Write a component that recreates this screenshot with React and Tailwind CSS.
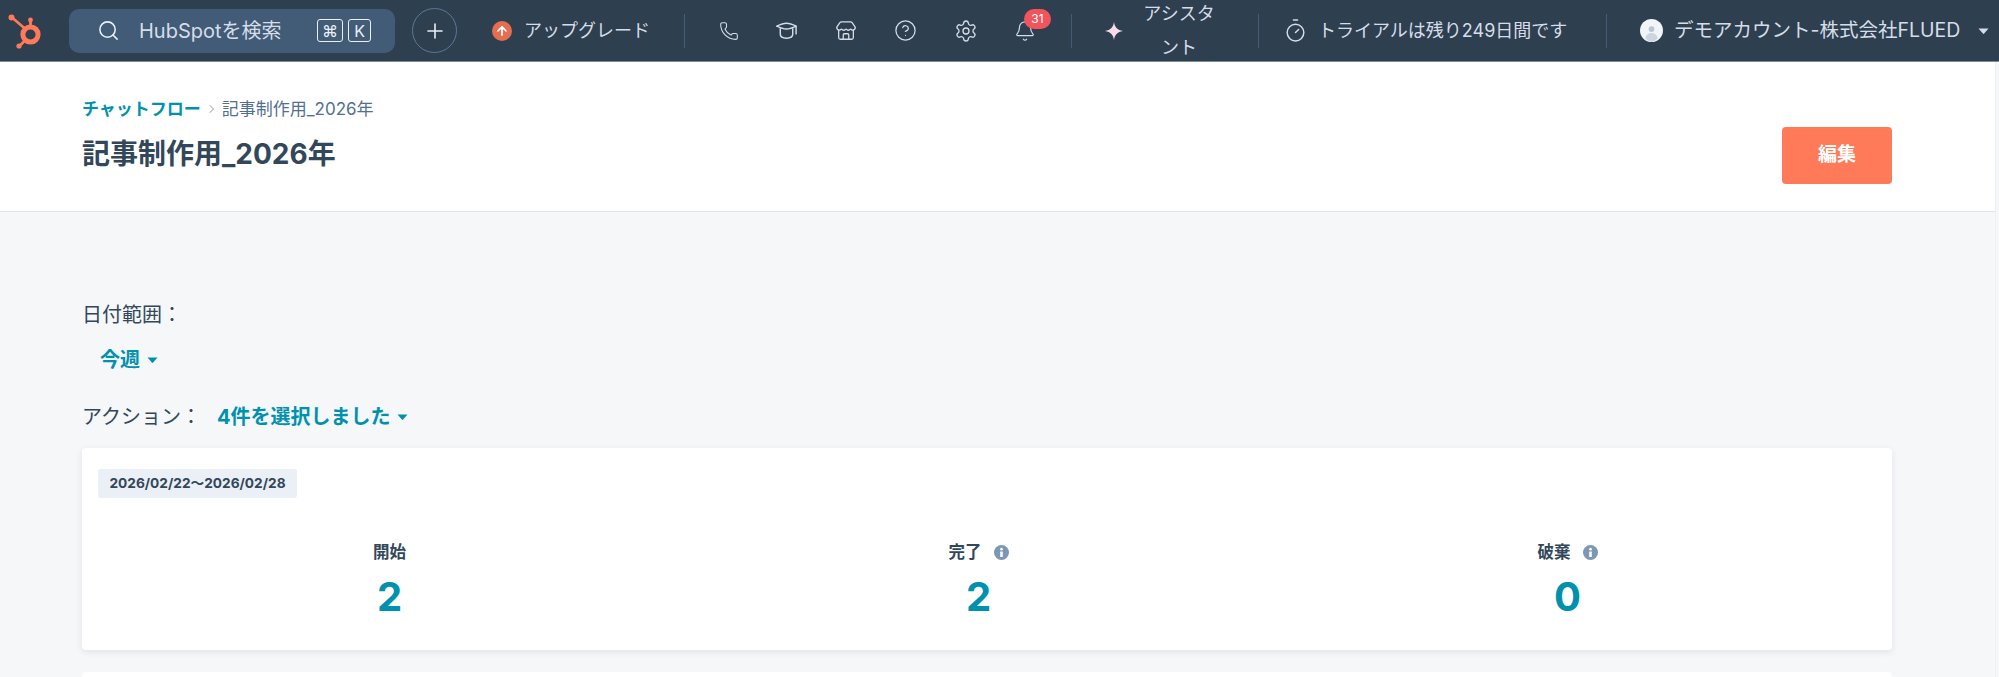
import { Phone, Store, CircleHelp, Settings, Bell, Timer, Search, Plus, ArrowUp } from 'lucide-react';

const Divider = ({ className = '' }) => <div className={`w-px h-[34px] bg-[#425b76] shrink-0 ${className}`} />;

const Caret = ({ className = '' }) => (
  <svg viewBox="0 0 10 6" className={`w-[11px] h-[6px] fill-current ${className}`}>
    <path d="M0 0.5h10L5.6 5.6a.8.8 0 0 1-1.2 0z" />
  </svg>
);

const InfoIcon = () => (
  <svg viewBox="0 0 16 16" className="w-[15px] h-[15px]">
    <circle cx="8" cy="8" r="8" fill="#7c98b6" />
    <circle cx="8" cy="4.4" r="1.4" fill="#fff" />
    <path d="M6.6 7h2.8v5.8H6.6z" fill="#fff" />
  </svg>
);

const HubLogo = () => (
  <svg viewBox="0 0 40 40" className="w-10 h-10 shrink-0">
    <g fill="none" stroke="#ff7a59">
      <circle cx="23.5" cy="23.5" r="7.6" strokeWidth="5" />
      <path d="M5 6.5l14 12" strokeWidth="2.6" />
      <path d="M23.5 9v7" strokeWidth="2.8" />
      <path d="M18 29.5l-5.5 5.5" strokeWidth="2.6" />
    </g>
    <circle cx="4.5" cy="6.5" r="3" fill="#ff7a59" />
    <circle cx="23.5" cy="9" r="2.4" fill="#ff7a59" />
    <circle cx="12" cy="35" r="2.6" fill="#ff7a59" />
  </svg>
);

const CapIcon = () => (
  <svg viewBox="0 0 24 20" className="w-[23px] h-[20px]" fill="none" stroke="#d5dee8" strokeWidth="1.5" strokeLinejoin="round" strokeLinecap="round">
    <path d="M2 5c4-2 8-3 10-3s6 1 10 3v8" />
    <path d="M2 5c4 2 8 3 10 3s6-1 10-3" />
    <path d="M5.5 7.5v6c0 2.5 3 4 6.5 4s6.5-1.500 6.5-4v-6" />
  </svg>
);

const StoreIcon = () => <Store className="w-[22px] h-[22px]" strokeWidth={1.4} color="#d5dee8" />;

const Sparkle = () => (
  <svg viewBox="0 0 20 20" className="w-[18px] h-[18px]">
    <path d="M10 0c.8 5.6 3.6 9 10 10-6.4 1-9.2 4.4-10 10-.8-5.6-3.6-9-10-10 6.4-1 9.200-4.4 10-10z" fill="#fbdbe6" />
  </svg>
);

const Avatar = () => (
  <svg viewBox="0 0 24 24" className="w-[23px] h-[23px] shrink-0">
    <circle cx="12" cy="12" r="12" fill="#f2f5f8" />
    <circle cx="12" cy="10.5" r="3" fill="#b8c6d4" />
    <path d="M5.5 20c1-4 3.5-5.5 6.500-5.5s5.500 1.5 6.500 5.5A11 11 0 0 1 12 24a11 11 0 0 1-6.5-4z" fill="#cbd6e2" />
  </svg>
);

const Navbar = () => (
  <nav className="h-[62px] bg-[#2e3f50] border-b border-[#7c8a99] flex items-center text-[#d5dee8] text-[18px] whitespace-nowrap">
    <div className="ml-[7px]"><HubLogo /></div>

    {/* Search */}
    <div className="ml-[22px] w-[326px] h-[44px] rounded-[10px] bg-[#425b76] flex items-center pl-[28px] shrink-0">
      <Search className="w-[23px] h-[23px]" strokeWidth={1.6} color="#eaf0f6" />
      <span className="ml-[19px] w-[178px] text-[20px]">HubSpotを検索</span>
      <span className="w-[26px] h-[23px] border border-[#eaf0f6] rounded-[3px] flex items-center justify-center text-[16px] text-[#eaf0f6]">⌘</span>
      <span className="ml-[5px] w-[23px] h-[23px] border border-[#eaf0f6] rounded-[3px] flex items-center justify-center text-[16px] text-[#eaf0f6]">K</span>
    </div>

    <div className="ml-[17px] w-[45px] h-[45px] rounded-full border border-[#5a7897] flex items-center justify-center shrink-0">
      <Plus className="w-[24px] h-[24px]" strokeWidth={1.6} color="#eaf0f6" />
    </div>

    <div className="ml-[35px] w-[20px] h-[20px] rounded-full bg-[#e66e50] flex items-center justify-center shrink-0">
      <ArrowUp className="w-[14px] h-[14px]" strokeWidth={3} color="#fff" />
    </div>
    <span className="ml-[12px] w-[128px] text-[18px]">アップグレード</span>
    <Divider className="ml-[32px]" />

    <div className="ml-[34px] w-[20px] flex justify-center"><Phone className="w-[20px] h-[20px]" strokeWidth={1.3} color="#d5dee8" /></div>
    <div className="ml-[36px] w-[23px] flex justify-center"><CapIcon /></div>
    <div className="ml-[37px] w-[22px] flex justify-center"><StoreIcon /></div>
    <div className="ml-[38px] w-[21px] flex justify-center"><CircleHelp className="w-[23px] h-[23px] shrink-0" strokeWidth={1.3} color="#d5dee8" /></div>
    <div className="ml-[39px] w-[21px] flex justify-center"><Settings className="w-[24px] h-[24px] shrink-0" strokeWidth={1.3} color="#d5dee8" /></div>
    <div className="ml-[39px] relative w-[20px] flex justify-center">
      <Bell className="w-[22px] h-[24px] shrink-0" strokeWidth={1.3} color="#d5dee8" />
      <span className="absolute left-[9px] top-[-10px] w-[27px] h-[20px] rounded-full bg-[#f2545b] text-white text-[12px] flex items-center justify-center">31</span>
    </div>
    <Divider className="ml-[36px]" />

    <div className="ml-[33px] w-[18px] flex"><Sparkle /></div>
    <div className="ml-[19px] w-[74px] text-center text-[18px] leading-[34px] whitespace-normal break-all">アシスタント</div>
    <Divider className="ml-[42px]" />

    <div className="ml-[25px] w-[22px] flex justify-center"><Timer className="w-[25px] h-[25px] shrink-0" strokeWidth={1.4} color="#d5dee8" /></div>
    <span className="ml-[12px] w-[256px] text-[18px]">トライアルは残り249日間です</span>
    <Divider className="ml-[32px]" />

    <div className="ml-[33px]"><Avatar /></div>
    <span className="ml-[11px] w-[288px] text-[19.5px]">デモアカウント-株式会社FLUED</span>
    <Caret className="ml-[16px] text-[#d5dee8]" />
  </nav>
);

const Stat = ({ label, value, info }) => (
  <div className="flex flex-col items-center">
    <div className="h-[24px] flex items-center gap-[12px] text-[16.5px] font-bold text-[#33475b]">
      <span>{label}</span>
      {info && <InfoIcon />}
    </div>
    <div className="mt-[8px] text-[40px] leading-[50px] font-bold text-[#0091ae]">{value}</div>
  </div>
);

export default function App() {
  return (
    <div className="h-[677px] overflow-hidden bg-[#f5f7f9] font-['Inter','Noto_Sans_CJK_JP',sans-serif] text-[#33475b]">
      <Navbar />
      <div className="flex">
        <main className="flex-1 min-w-0">
          {/* Header */}
          <header className="h-[150px] bg-white border-b border-[#dfe3eb] pl-[82px] pr-[103px] flex justify-between">
            <div>
              <div className="pt-[35px] h-[58px] flex items-center text-[17px] leading-[24px]">
                <span className="font-bold text-[#0091ae]">チャットフロー</span>
                <svg viewBox="0 0 8 12" className="w-[6px] h-[10px] ml-[8px] mr-[7px]" fill="none" stroke="#7c98b6" strokeWidth="1.3"><path d="M1 1l5 5-5 5" /></svg>
                <span className="text-[#516f90]">記事制作用_2026年</span>
              </div>
              <h1 className="mt-[16px] text-[28px] leading-[36px] font-bold text-[#33475b]">記事制作用_2026年</h1>
            </div>
            <button className="mt-[65px] w-[110px] h-[57px] rounded-[4px] bg-[#ff7a59] text-white text-[19px] font-bold">編集</button>
          </header>

          {/* Filters */}
          <div className="pl-[82px] pr-[103px]">
            <div className="mt-[88px] text-[20px] leading-[30px]">日付範囲：</div>
            <div className="mt-[15px] pl-[18px] flex items-center gap-[7px] text-[20px] leading-[30px] font-bold text-[#0091ae]">
              今週<Caret />
            </div>
            <div className="mt-[27px] flex items-center text-[20px] leading-[30px]">
              <span className="w-[135px]">アクション：</span>
              <span className="font-bold text-[#0091ae]">4件を選択しました</span>
              <Caret className="ml-[6px] text-[#0091ae]" />
            </div>

            {/* Stats card */}
            <section className="mt-[16px] h-[202px] bg-white rounded-[4px] shadow-[0_2px_6px_rgba(45,62,80,0.10)] pt-[21px]">
              <div className="ml-[16px] w-[199px] h-[29px] rounded-[3px] bg-[#eaf0f6] flex items-center justify-center text-[13.7px] font-bold text-[#33475b]">
                2026/02/22〜2026/02/28
              </div>
              <div className="mt-[42px] pl-[13px] pr-[30px] grid grid-cols-3">
                <Stat label="開始" value="2" />
                <Stat label="完了" value="2" info />
                <Stat label="破棄" value="0" info />
              </div>
            </section>

            <section className="mt-[22px] h-[60px] bg-white rounded-[4px]" />
          </div>
        </main>
        {/* scrollbar track */}
        <div className="w-[4px] border-l border-[#eaf0f6] shrink-0" />
      </div>
    </div>
  );
}
